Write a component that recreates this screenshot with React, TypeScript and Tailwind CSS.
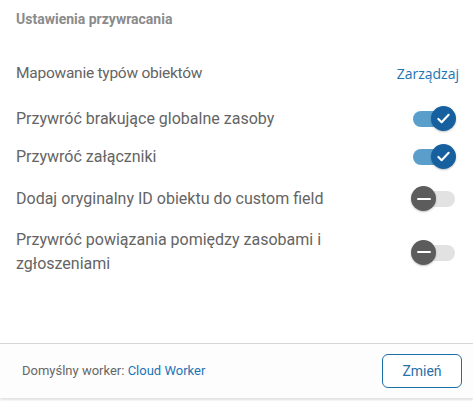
import React from "react";

const rows = [
  { label: "Przywróć brakujące globalne zasoby", on: true, mt: "mt-[21px]" },
  { label: "Przywróć załączniki", on: true, mt: "mt-[13px]" },
  { label: "Dodaj oryginalny ID obiektu do custom field", on: false, mt: "mt-[17px]" },
  { label: "Przywróć powiązania pomiędzy zasobami i zgłoszeniami", on: false, mt: "mt-[17px]" },
];

function Toggle({ on }: { on: boolean }) {
  return (
    <div className="relative w-[45px] h-[25px] shrink-0">
      <div
        className={
          "absolute top-[5px] left-[2px] w-[42px] h-[16px] rounded-full " +
          (on ? "bg-[#5a9fcc]" : "bg-[#e2e2e2]")
        }
      />
      {on ? (
        <div className="absolute top-0 right-0 w-[25px] h-[25px] rounded-full bg-[#16609f] flex items-center justify-center shadow-[0_1px_2px_rgba(0,0,0,0.25)]">
          <svg width="15" height="15" viewBox="0 0 16 16" fill="none">
            <path d="M2.5 8.5l3.5 3.5 7.5-8" stroke="white" strokeWidth="2.2" strokeLinecap="round" strokeLinejoin="round" />
          </svg>
        </div>
      ) : (
        <div className="absolute top-0 left-0 w-[25px] h-[25px] rounded-full bg-[#5c5c5c] flex items-center justify-center shadow-[0_1px_2px_rgba(0,0,0,0.25)]">
          <div className="w-[14px] h-[2px] bg-white rounded-full" />
        </div>
      )}
    </div>
  );
}

export default function App() {
  return (
    <div className="w-[473px] h-[405px] bg-white flex flex-col font-['Roboto',sans-serif]">
      <div className="flex-1 px-4">
        <h2 className="pt-[10px] text-[14px] leading-[18px] font-bold text-[#8b8b8b]">
          Ustawienia przywracania
        </h2>

        <div className="mt-[33px] h-[24px] flex items-center justify-between -mr-[2px]">
          <span className="text-[15.5px] leading-[24px] text-[#646464] tracking-[-0.25px]">Mapowanie typów obiektów</span>
          <span className="text-[14px] font-['Open_Sans',sans-serif] text-[#1d74b4]">Zarządzaj</span>
        </div>

        {rows.map((r) => (
          <div key={r.label} className={"flex items-center justify-between pr-[1px] " + r.mt}>
            <span className="text-[16px] leading-[24px] text-[#646464] max-w-[380px]">{r.label}</span>
            <Toggle on={r.on} />
          </div>
        ))}
      </div>

      <div className="h-[55px] mb-[7px] border-t border-[#d6d6d6] bg-[#fdfdfd] shadow-[0_2px_2px_rgba(0,0,0,0.12)] flex items-center justify-between pl-[22px] pr-[11px]">
        <span className="text-[13px] text-[#666]">
          Domyślny worker: <span className="text-[#1d74b4]">Cloud Worker</span>
        </span>
        <button className="w-[80px] h-[34px] rounded-[6px] border border-[#1d6fa8] text-[14px] text-[#2a6fa6] bg-white">
          Zmień
        </button>
      </div>
    </div>
  );
}
